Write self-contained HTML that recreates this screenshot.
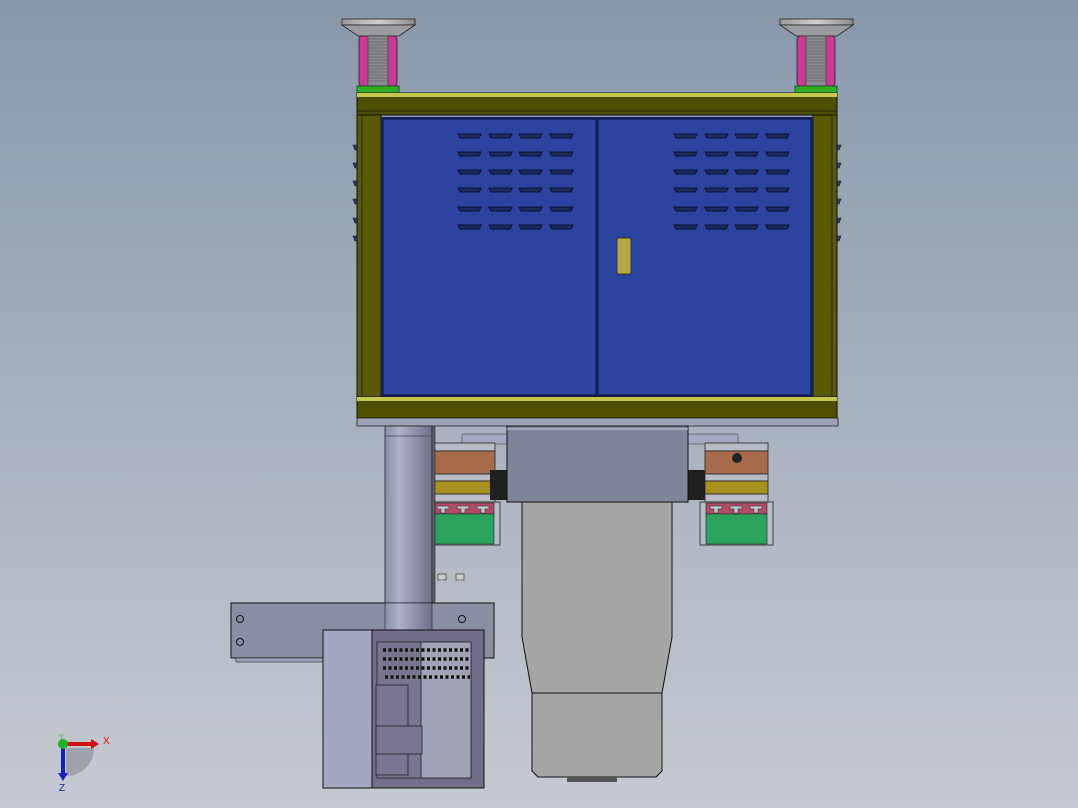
<!DOCTYPE html>
<html><head><meta charset="utf-8"><style>
html,body{margin:0;padding:0;width:1078px;height:808px;overflow:hidden}
svg{display:block}
</style></head><body>
<svg width="1078" height="808" viewBox="0 0 1078 808" xmlns="http://www.w3.org/2000/svg" font-family="Liberation Sans, sans-serif">
<defs>
<linearGradient id="bg" x1="0" y1="0" x2="0" y2="1"><stop offset="0" stop-color="#8898ab"/><stop offset="0.5" stop-color="#a7b1be"/><stop offset="1" stop-color="#c6cad2"/></linearGradient>
<linearGradient id="plate" x1="0" y1="0" x2="1" y2="0"><stop offset="0" stop-color="#9a9a9e"/><stop offset="0.5" stop-color="#d0d0d2"/><stop offset="1" stop-color="#8a8a90"/></linearGradient>
<linearGradient id="col" x1="0" y1="0" x2="1" y2="0"><stop offset="0" stop-color="#8a8ea8"/><stop offset="0.3" stop-color="#aeb2c6"/><stop offset="1" stop-color="#6e7088"/></linearGradient>
<g id="vent"><path d="M0 0h23l-2 4h-19z" fill="#1e2b60" stroke="#0a0f30" stroke-width="1"/></g>
<g id="foot">
<rect x="0" y="0" width="73" height="6" fill="url(#plate)" stroke="#222" stroke-width="0.8"/>
<path d="M0 6h73l-16 11h-41z" fill="#9a9ca2" stroke="#222" stroke-width="0.8"/>
<rect x="17" y="17" width="38" height="50" rx="3" fill="#c83a94" stroke="#222" stroke-width="0.8"/>
<rect x="26" y="17" width="20" height="50" fill="#8a8a8e" stroke="#333" stroke-width="0.6"/>
<path d="M26 20h20M26 23h20M26 26h20M26 29h20M26 32h20M26 35h20M26 38h20M26 41h20M26 44h20M26 47h20M26 50h20M26 53h20M26 56h20M26 59h20M26 62h20" stroke="#555" stroke-width="0.6"/>
<rect x="15" y="67" width="42" height="7" fill="#2eae20" stroke="#143" stroke-width="0.8"/>
</g>
<g id="blk">
<rect x="5" y="0" width="63" height="8" fill="#b8bcc6" stroke="#222" stroke-width="0.8"/>
<rect x="5" y="8" width="63" height="23" fill="#a86c4c" stroke="#222" stroke-width="0.8"/>
<rect x="5" y="31" width="63" height="7" fill="#b8bcc6" stroke="#222" stroke-width="0.8"/>
<rect x="5" y="38" width="63" height="13" fill="#a8901e" stroke="#222" stroke-width="0.8"/>
<rect x="5" y="51" width="63" height="8" fill="#b8bcc6" stroke="#222" stroke-width="0.8"/>
<rect x="0" y="59" width="73" height="43" fill="#b8bcc6" stroke="#222" stroke-width="0.8"/>
<rect x="6" y="60" width="61" height="11" fill="#b04c66" stroke="#222" stroke-width="0.6"/>
<path d="M10 63h12v3h-4v4h-4v-4h-4zM30 63h12v3h-4v4h-4v-4h-4zM50 63h12v3h-4v4h-4v-4h-4z" fill="#bfc3cc" stroke="#222" stroke-width="0.5"/>
<rect x="6" y="71" width="61" height="30" fill="#2ca45e" stroke="#222" stroke-width="0.6"/>
</g>
</defs>
<rect width="1078" height="808" fill="url(#bg)"/>

<!-- feet -->
<use href="#foot" x="342" y="19"/>
<use href="#foot" x="780" y="19"/>

<!-- top beam -->
<rect x="357" y="93" width="480" height="22" fill="#4f4f00" stroke="#111" stroke-width="1"/>
<rect x="357" y="93" width="480" height="4" fill="#c6c64a"/>
<line x1="357" y1="111" x2="837" y2="111" stroke="#222" stroke-width="1"/>
<!-- posts -->
<rect x="357" y="115" width="24" height="282" fill="#5a5a04" stroke="#111" stroke-width="1"/>
<line x1="362" y1="115" x2="362" y2="397" stroke="#222"/>
<rect x="813" y="115" width="24" height="282" fill="#5a5a04" stroke="#111" stroke-width="1"/>
<line x1="832" y1="115" x2="832" y2="397" stroke="#222"/>
<g fill="#2c3a7a" stroke="#111" stroke-width="0.6">
<path d="M353 145h4v5h-2z"/><path d="M353 163h4v5h-2z"/><path d="M353 181h4v5h-2z"/><path d="M353 199h4v5h-2z"/><path d="M353 218h4v5h-2z"/><path d="M353 236h4v5h-2z"/>
<path d="M837 145h4l-2 5h-2z"/><path d="M837 163h4l-2 5h-2z"/><path d="M837 181h4l-2 5h-2z"/><path d="M837 199h4l-2 5h-2z"/><path d="M837 218h4l-2 5h-2z"/><path d="M837 236h4l-2 5h-2z"/>
</g>
<!-- doors -->
<rect x="381" y="117" width="432" height="280" fill="#1a2460"/>
<rect x="383" y="119" width="213" height="276" fill="#2c44a0" stroke="#0d1440" stroke-width="1"/>
<rect x="598" y="119" width="213" height="276" fill="#2c44a0" stroke="#0d1440" stroke-width="1"/>
<rect x="617" y="238" width="14" height="36" fill="#b4a648" stroke="#222" stroke-width="0.8"/>
<g>
<use href="#vent" x="458" y="134"/><use href="#vent" x="489" y="134"/><use href="#vent" x="519" y="134"/><use href="#vent" x="550" y="134"/>
<use href="#vent" x="458" y="152"/><use href="#vent" x="489" y="152"/><use href="#vent" x="519" y="152"/><use href="#vent" x="550" y="152"/>
<use href="#vent" x="458" y="170"/><use href="#vent" x="489" y="170"/><use href="#vent" x="519" y="170"/><use href="#vent" x="550" y="170"/>
<use href="#vent" x="458" y="188"/><use href="#vent" x="489" y="188"/><use href="#vent" x="519" y="188"/><use href="#vent" x="550" y="188"/>
<use href="#vent" x="458" y="207"/><use href="#vent" x="489" y="207"/><use href="#vent" x="519" y="207"/><use href="#vent" x="550" y="207"/>
<use href="#vent" x="458" y="225"/><use href="#vent" x="489" y="225"/><use href="#vent" x="519" y="225"/><use href="#vent" x="550" y="225"/>
<use href="#vent" x="674" y="134"/><use href="#vent" x="705" y="134"/><use href="#vent" x="735" y="134"/><use href="#vent" x="766" y="134"/>
<use href="#vent" x="674" y="152"/><use href="#vent" x="705" y="152"/><use href="#vent" x="735" y="152"/><use href="#vent" x="766" y="152"/>
<use href="#vent" x="674" y="170"/><use href="#vent" x="705" y="170"/><use href="#vent" x="735" y="170"/><use href="#vent" x="766" y="170"/>
<use href="#vent" x="674" y="188"/><use href="#vent" x="705" y="188"/><use href="#vent" x="735" y="188"/><use href="#vent" x="766" y="188"/>
<use href="#vent" x="674" y="207"/><use href="#vent" x="705" y="207"/><use href="#vent" x="735" y="207"/><use href="#vent" x="766" y="207"/>
<use href="#vent" x="674" y="225"/><use href="#vent" x="705" y="225"/><use href="#vent" x="735" y="225"/><use href="#vent" x="766" y="225"/>
</g>
<!-- bottom beam -->
<rect x="357" y="397" width="480" height="21" fill="#4f4f00" stroke="#111" stroke-width="1"/>
<rect x="357" y="397" width="480" height="4" fill="#c6c64a"/>
<rect x="357" y="418" width="481" height="8" fill="#9ea4b8" stroke="#222" stroke-width="0.8"/>

<!-- blocks -->
<rect x="462" y="434" width="48" height="10" fill="#a4a8c0" stroke="#333" stroke-width="0.5"/>
<rect x="688" y="434" width="50" height="10" fill="#a4a8c0" stroke="#333" stroke-width="0.5"/>
<use href="#blk" x="427" y="443"/>
<use href="#blk" x="700" y="443"/>
<circle cx="737" cy="458" r="5" fill="#222"/>
<rect x="490" y="470" width="17" height="30" fill="#202020"/>
<rect x="688" y="470" width="17" height="30" fill="#202020"/>

<!-- column -->
<rect x="385" y="426" width="47" height="204" fill="url(#col)" stroke="#222" stroke-width="0.8"/>
<rect x="432" y="426" width="3" height="204" fill="#5c5e70" stroke="#222" stroke-width="0.6"/>
<line x1="385" y1="436" x2="432" y2="436" stroke="#444" stroke-width="0.8"/>

<!-- center box -->
<rect x="507" y="426" width="181" height="76" fill="#7f8598" stroke="#111" stroke-width="1"/>
<line x1="507" y1="429" x2="688" y2="429" stroke="#ccd" stroke-width="1"/>
<!-- motor -->
<path d="M522 502h150v135l-10 56h-130l-10-56z" fill="#a5a5a5" stroke="#111" stroke-width="1"/>
<path d="M532 693h130v78l-6 6h-118l-6-6z" fill="#a5a5a5" stroke="#111" stroke-width="1"/>
<rect x="567" y="777" width="50" height="5" fill="#555"/>

<!-- pins -->
<rect x="438" y="574" width="8" height="6" fill="#ccc" stroke="#222" stroke-width="0.6"/>
<rect x="441" y="580" width="2" height="22" fill="#bbb"/>
<rect x="456" y="574" width="8" height="6" fill="#ccc" stroke="#222" stroke-width="0.6"/>
<rect x="459" y="580" width="2" height="22" fill="#bbb"/>

<!-- horizontal plate -->
<rect x="231" y="603" width="263" height="55" fill="#8a8ea2" stroke="#111" stroke-width="1"/>
<rect x="236" y="658" width="90" height="4" fill="#9ea2b8" stroke="#222" stroke-width="0.6"/>
<circle cx="240" cy="619" r="3.5" fill="none" stroke="#111"/><circle cx="240" cy="642" r="3.5" fill="none" stroke="#111"/>
<circle cx="462" cy="619" r="3.5" fill="none" stroke="#111"/>
<rect x="385" y="603" width="47" height="27" fill="url(#col)" stroke="#222" stroke-width="0.6"/>

<!-- electrical box -->
<rect x="323" y="630" width="49" height="158" fill="#a3a8c2" stroke="#111" stroke-width="1"/>
<rect x="372" y="630" width="112" height="158" fill="#726d88" stroke="#111" stroke-width="1"/>
<rect x="377" y="642" width="94" height="136" fill="#79748f" stroke="#222" stroke-width="0.8"/>
<rect x="421" y="642" width="50" height="136" fill="#a0a2b6" stroke="#222" stroke-width="0.8"/>
<g fill="#111">
<rect x="376" y="685" width="32" height="90" fill="#7a7590" stroke="#222" stroke-width="0.8"/>
<rect x="376" y="726" width="46" height="28" fill="#7a7590" stroke="#222" stroke-width="0.8"/>
</g>
<g fill="#111">
<path d="M383 650h87M383 659h87M383 668h87M385 677h85" stroke="#111" stroke-width="3.5" stroke-dasharray="3,2.5"/>
</g>
<!-- axes -->
<path d="M66 776a28 28 0 0 0 28-28h-28z" fill="#8e939c" opacity="0.7"/>
<line x1="63" y1="744" x2="92" y2="744" stroke="#d01010" stroke-width="4"/>
<path d="M91 739l8 5-8 5z" fill="#d01010"/>
<line x1="63" y1="744" x2="63" y2="774" stroke="#1020c8" stroke-width="4"/>
<path d="M58 773l5 8 5-8z" fill="#1020c8"/>
<circle cx="63" cy="744" r="5" fill="#20b020"/>
<text x="103" y="744" font-size="10" fill="#e01010">X</text>
<text x="59" y="791" font-size="10" fill="#1020c8">Z</text>
<text x="59" y="739" font-size="7" fill="#20b020">Y</text>
</svg>
</body></html>
